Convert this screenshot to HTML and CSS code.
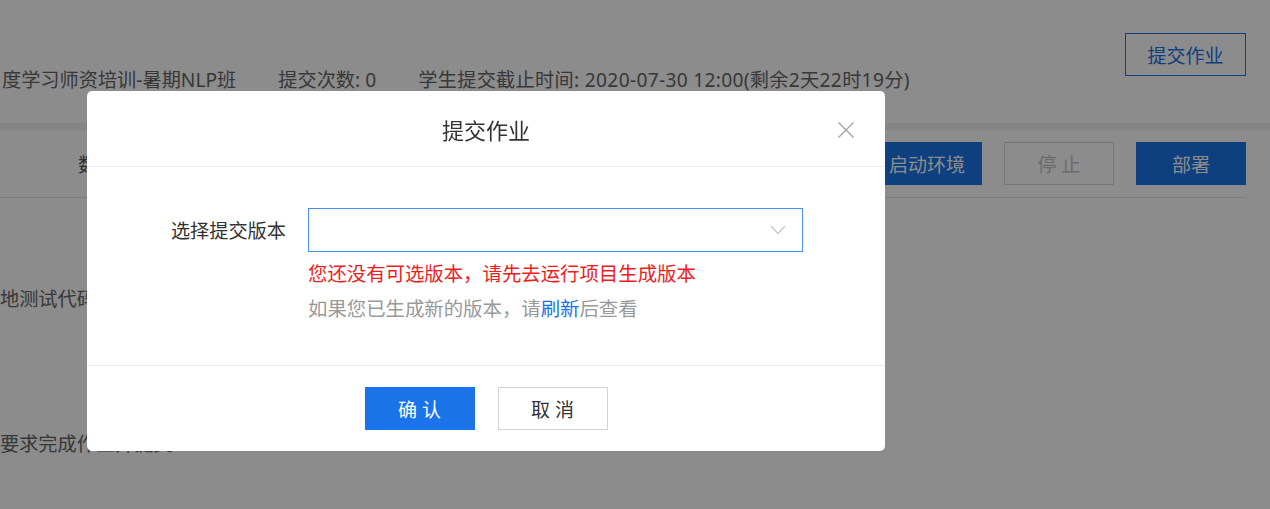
FILE: index.html
```html
<!DOCTYPE html>
<html lang="zh-CN">
<head>
  <meta charset="UTF-8" />
  <meta name="viewport" content="width=device-width, initial-scale=1.0" />
  <title>提交作业</title>
  <link rel="stylesheet" href="styles.css">
</head>
<body>
  <div class="page">
    <header class="task-head">
      <div class="task-info">
        <span class="course">度学习师资培训-暑期NLP班</span>
        <span>提交次数: 0</span>
        <span class="deadline">学生提交截止时间: 2020-07-30 12:00(剩余2天22时19分)</span>
      </div>
      <button class="btn btn-outline">提交作业</button>
    </header>

    <div class="gap-strip"></div>

    <div class="toolbar">
      <div class="toolbar-title">数据集</div>
      <div class="toolbar-actions">
        <button class="btn btn-primary">启动环境</button>
        <button class="btn btn-disabled">停 止</button>
        <button class="btn btn-primary">部署</button>
      </div>
    </div>

    <section class="task-body">
      <p class="line-one">地测试代码，确认无误后再提交作业</p>
      <p class="line-two">要求完成作业并提交</p>
    </section>
  </div>

  <div class="mask"></div>

  <div class="dialog" role="dialog" aria-label="提交作业">
    <div class="dialog-head">
      <h2 class="dialog-title">提交作业</h2>
      <button class="dialog-close" aria-label="关闭">
        <svg width="18" height="18" viewBox="0 0 18 18"><path d="M1.5 1.5 L16.5 16.5 M16.5 1.5 L1.5 16.5" stroke="#a3a3a3" stroke-width="1.4" fill="none"/></svg>
      </button>
    </div>
    <div class="dialog-body">
      <div class="form-row">
        <label class="form-label">选择提交版本</label>
        <div class="select">
          <svg class="select-arrow" width="16" height="10" viewBox="0 0 16 10"><path d="M1 1 L8 8.5 L15 1" stroke="#c8c8c8" stroke-width="1.3" fill="none"/></svg>
        </div>
      </div>
      <p class="msg-error">您还没有可选版本，请先去运行项目生成版本</p>
      <p class="msg-hint">如果您已生成新的版本，请<a href="#">刷新</a>后查看</p>
    </div>
    <div class="dialog-foot">
      <button class="btn btn-confirm">确 认</button>
      <button class="btn btn-cancel">取 消</button>
    </div>
  </div>
</body>
</html>
```

FILE: styles.css
```css
:root {
  --blue: #1a73e8;
  --text: #333;
  --font-main: "Noto Sans", "Noto Sans CJK SC", sans-serif;
}

* {
  box-sizing: border-box;
}

body {
  margin: 0;
  font-family: var(--font-main);
  background: #fff;
  color: var(--text);
  overflow: hidden;
  height: 509px;
}

p {
  margin: 0;
}

.btn {
  font-family: var(--font-main);
  font-size: 19px;
  height: 43px;
  width: 110px;
  border: 1px solid transparent;
  background: #fff;
  cursor: pointer;
  padding: 0;
}

.task-head {
  height: 123px;
  display: flex;
  justify-content: space-between;
  align-items: flex-start;
  padding-right: 24px;
}

.task-info {
  display: flex;
  gap: 42px;
  margin-top: 67px;
  margin-left: 2px;
  font-size: 19.2px;
  line-height: 26px;
  color: #666;
  white-space: nowrap;
}

.deadline {
  letter-spacing: 0.3px;
}

.btn-outline {
  width: 121px;
  margin-top: 33px;
  border-color: var(--blue);
  color: var(--blue);
}

.gap-strip {
  height: 7px;
  background: #f2f2f2;
}

.toolbar {
  height: 68px;
  margin-right: 24px;
  border-bottom: 1px solid #e6e6e6;
  display: flex;
  justify-content: space-between;
  align-items: center;
}

.toolbar-title {
  padding-left: 78px;
  font-size: 19.2px;
  color: #555;
}

.toolbar-actions {
  display: flex;
  gap: 22px;
}

.btn-primary {
  background: var(--blue);
  color: #fff;
}

.btn-disabled {
  border-color: #d8d8d8;
  color: #c4c4c4;
}

.task-body {
  font-size: 19.2px;
  color: #666;
  white-space: nowrap;
}

.line-one {
  margin-top: 88px;
  line-height: 26px;
}

.line-two {
  margin-top: 119px;
  line-height: 26px;
}

.mask {
  position: fixed;
  inset: 0;
  background: rgba(0, 0, 0, 0.45);
}

.dialog {
  position: fixed;
  left: 87px;
  top: 91px;
  width: 798px;
  background: #fff;
  border-radius: 5px;
}

.dialog-head {
  height: 76px;
  border-bottom: 1px solid #ebebeb;
  display: flex;
  align-items: center;
  justify-content: center;
  position: relative;
}

.dialog-title {
  margin: 0;
  font-size: 22px;
  font-weight: normal;
  color: #333;
}

.dialog-close {
  position: absolute;
  right: 30px;
  top: 30px;
  width: 18px;
  height: 18px;
  padding: 0;
  border: none;
  background: none;
  display: flex;
}

.dialog-body {
  height: 198px;
  padding-top: 41px;
}

.form-row {
  display: flex;
  align-items: center;
  gap: 22px;
}

.form-label {
  width: 199px;
  text-align: right;
  font-size: 19.2px;
  color: #333;
}

.select {
  width: 495px;
  height: 44px;
  border: 1px solid #4a90ee;
  display: flex;
  align-items: center;
  justify-content: flex-end;
  padding-right: 16px;
}

.msg-error,
.msg-hint {
  margin-left: 221px;
  font-size: 19.4px;
  line-height: 28px;
}

.msg-error {
  margin-top: 8px;
  color: #ee1c1c;
}

.msg-hint {
  margin-top: 7px;
  color: #999;
}

.msg-hint a {
  color: var(--blue);
  text-decoration: none;
}

.dialog-foot {
  height: 86px;
  border-top: 1px solid #ebebeb;
  display: flex;
  align-items: center;
  justify-content: center;
  gap: 23px;
}

.btn-confirm {
  width: 110px;
  background: var(--blue);
  color: #fff;
}

.btn-cancel {
  width: 110px;
  border-color: #d3d3d3;
  color: #333;
}
```
